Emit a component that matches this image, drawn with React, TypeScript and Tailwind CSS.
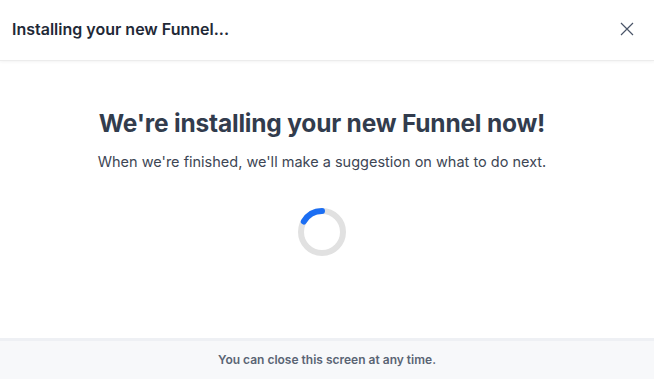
import React from "react";

export default function App() {
  return (
    <div className="w-[654px] h-[379px] bg-white flex flex-col overflow-hidden" style={{ fontFamily: "Inter, 'Open Sans', sans-serif" }}>
      <div className="h-[61px] shrink-0 flex items-center justify-between pl-[12px] pr-[20px] pb-[3px] border-b border-[#ececec] shadow-[0_1px_3px_rgba(0,0,0,0.05)] relative z-10">
        <div className="text-[16px] font-semibold text-[#1f2937]">Installing your new Funnel...</div>
        <svg width="14" height="14" viewBox="0 0 14 14" className="text-[#4a5568]">
          <path d="M1 1L13 13M13 1L1 13" stroke="currentColor" strokeWidth="1.2" />
        </svg>
      </div>
      <div className="flex-1 flex flex-col items-center pr-[10px]">
        <h1 className="mt-[47px] text-[24.5px] leading-[30px] font-bold text-[#323c4d] tracking-[-0.2px]">We're installing your new Funnel now!</h1>
        <p className="mt-[15px] text-[14.5px] leading-[18px] text-[#3d4654]">When we're finished, we'll make a suggestion on what to do next.</p>
        <div className="mt-[36px]">
          <svg width="50" height="50" viewBox="0 0 50 50">
            <circle cx="25" cy="25" r="21" fill="none" stroke="#e1e1e1" strokeWidth="6" />
            <path d="M 6.81 14.5 A 21 21 0 0 1 25 4" fill="none" stroke="#1b6ef3" strokeWidth="6" strokeLinecap="round" />
          </svg>
        </div>
      </div>
      <div className="h-[41px] shrink-0 bg-[#f7f8fa] border-t-[3px] border-[#eef0f4] flex items-center justify-center">
        <span className="text-[12px] font-semibold text-[#5a6474]">You can close this screen at any time.</span>
      </div>
    </div>
  );
}
